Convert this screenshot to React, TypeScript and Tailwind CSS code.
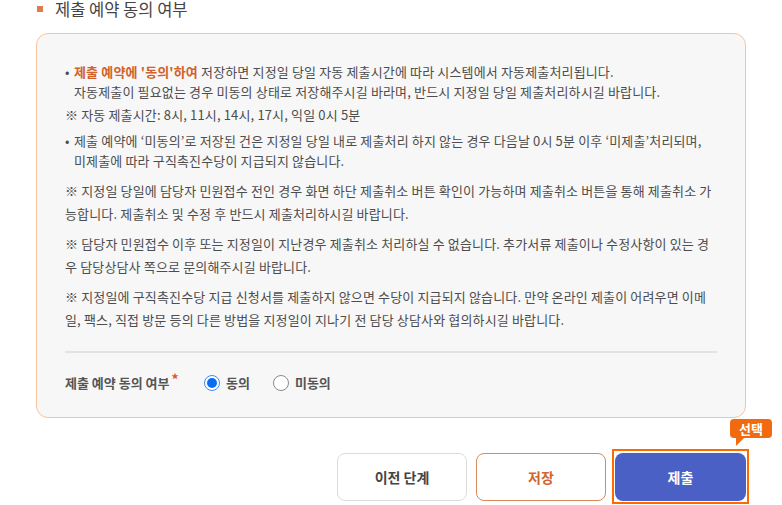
import { useState } from 'react';

const font = "font-['Noto_Sans_CJK_KR','Noto_Sans',sans-serif]";

function Radio({ checked, label, onClick }: { checked: boolean; label: string; onClick: () => void }) {
  return (
    <button type="button" onClick={onClick} className="flex items-center gap-[6px]">
      {checked ? (
        <span className="flex h-[16px] w-[16px] items-center justify-center rounded-full border-[1.5px] border-[#3d8af7] bg-white">
          <span className="h-[10px] w-[10px] rounded-full bg-[#0b6cf0]" />
        </span>
      ) : (
        <span className="h-[16px] w-[16px] rounded-full border-[1.5px] border-[#8a8a8a] bg-white" />
      )}
      <span className="text-[13px] font-bold text-[#555]">{label}</span>
    </button>
  );
}

export default function App() {
  const [agree, setAgree] = useState(true);

  return (
    <div className={`${font} h-[505px] w-[782px] overflow-hidden bg-white text-[#4d4d4d]`}>
      {/* 섹션 제목 */}
      <div className="flex h-[18px] items-center pl-[37px]">
        <span className="h-[6px] w-[6px] bg-[#e07b4f]" />
        <h2 className="ml-[12px] text-[16.5px] leading-[18px] text-[#444]">제출 예약 동의 여부</h2>
      </div>

      <div className="ml-[36px] mt-[15px] w-[710px] rounded-[12px] border-[1.5px] border-[#f8c4a0] bg-[#f7f7f7] px-[28px] pb-[24px] pt-[28px]">
        <div className="text-[13px] tracking-[0.15px] text-[#4d4d4d]">
          <div className="flex leading-[20px]">
            <span className="w-[9px] shrink-0">•</span>
            <div className="whitespace-nowrap">
              <p>
                <span className="font-bold text-[#d2622a]">제출 예약에 '동의'하여</span> 저장하면 지정일 당일 자동 제출시간에 따라 시스템에서 자동제출처리됩니다.
              </p>
              <p>자동제출이 필요없는 경우 미동의 상태로 저장해주시길 바라며, 반드시 지정일 당일 제출처리하시길 바랍니다.</p>
            </div>
          </div>
          <p className="mt-[3px] whitespace-nowrap leading-[20px]">※ 자동 제출시간: 8시, 11시, 14시, 17시, 익일 0시 5분</p>
          <div className="mt-[6px] flex leading-[20px]">
            <span className="w-[9px] shrink-0">•</span>
            <div className="whitespace-nowrap">
              <p>제출 예약에 ‘미동의’로 저장된 건은 지정일 당일 내로 제출처리 하지 않는 경우 다음날 0시 5분 이후 ‘미제출’처리되며,</p>
              <p>미제출에 따라 구직촉진수당이 지급되지 않습니다.</p>
            </div>
          </div>
          <div className="mt-[8px] whitespace-nowrap leading-[23px]">
            <p>※ 지정일 당일에 담당자 민원접수 전인 경우 화면 하단 제출취소 버튼 확인이 가능하며 제출취소 버튼을 통해 제출취소 가</p>
            <p>능합니다. 제출취소 및 수정 후 반드시 제출처리하시길 바랍니다.</p>
          </div>
          <div className="mt-[7px] whitespace-nowrap leading-[23px]">
            <p>※ 담당자 민원접수 이후 또는 지정일이 지난경우 제출취소 처리하실 수 없습니다. 추가서류 제출이나 수정사항이 있는 경</p>
            <p>우 담당상담사 쪽으로 문의해주시길 바랍니다.</p>
          </div>
          <div className="mt-[7px] whitespace-nowrap leading-[23px]">
            <p>※ 지정일에 구직촉진수당 지급 신청서를 제출하지 않으면 수당이 지급되지 않습니다. 만약 온라인 제출이 어려우면 이메</p>
            <p>일, 팩스, 직접 방문 등의 다른 방법을 지정일이 지나기 전 담당 상담사와 협의하시길 바랍니다.</p>
          </div>
        </div>

        <div className="mt-[20px] h-[2px] bg-[#e3e3e3]" />

        <div className="mt-[20px] flex h-[20px] items-center">
          <span className="flex w-[139px] items-center text-[13px] font-bold text-[#555]">
            제출 예약 동의 여부
            <span className="relative -top-[4px] ml-[2px] text-[14px] leading-none text-[#e0562a]">*</span>
          </span>
          <div className="flex items-center gap-[23px]">
            <Radio checked={agree} label="동의" onClick={() => setAgree(true)} />
            <Radio checked={!agree} label="미동의" onClick={() => setAgree(false)} />
          </div>
        </div>
      </div>

      {/* 하단 버튼 */}
      <div className="mt-[35px] flex w-[746px] justify-end gap-[9px]">
        <button className="h-[48px] w-[130px] rounded-[8px] border border-[#dcdcdc] bg-white text-[14px] font-bold text-[#444]">
          이전 단계
        </button>
        <button className="h-[48px] w-[130px] rounded-[8px] border-[1.5px] border-[#d9895a] bg-white text-[14px] font-bold text-[#d0672f]">
          저장
        </button>
        <div className="relative">
          <button className="h-[48px] w-[131px] rounded-[8px] bg-[#4b60c4] text-[14px] font-bold text-white">제출</button>
          <span className="pointer-events-none absolute -bottom-[3px] -left-[3px] -right-[3px] -top-[4px] border-[2.5px] border-[#ff6a00]" />
          <div className="absolute -right-[26px] -top-[34px]">
            <div className="rounded-[4px] bg-[#f26a10] px-[9px] text-[13px] font-bold leading-[19px] text-white">선택</div>
            <svg className="absolute left-[5px] top-[18px]" width="10" height="9" viewBox="0 0 10 9">
              <polygon points="1,0 10,0 1,9" fill="#f26a10" />
            </svg>
          </div>
        </div>
      </div>
    </div>
  );
}
